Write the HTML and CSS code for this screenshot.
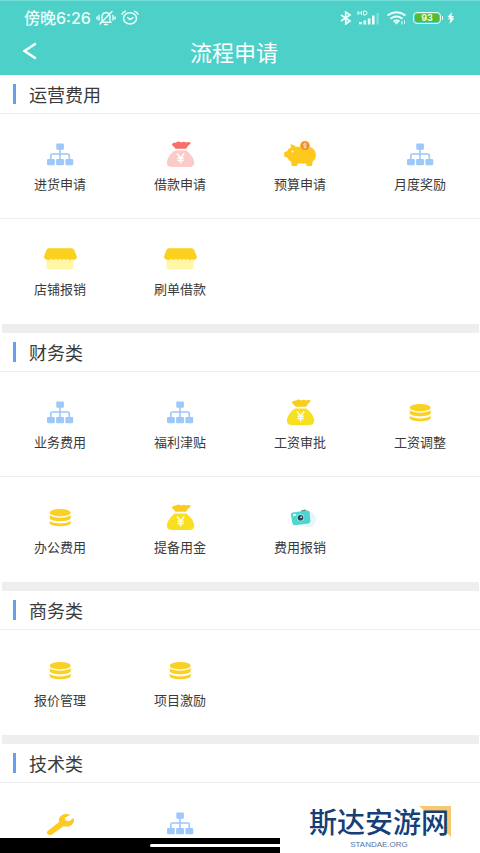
FILE: index.html
```html
<!DOCTYPE html>
<html lang="zh-CN">
<head>
<meta charset="utf-8">
<meta name="viewport" content="width=device-width, initial-scale=1">
<title>流程申请</title>
<link rel="stylesheet" href="styles.css">
</head>
<body>
<svg class="sprite" aria-hidden="true">
  <symbol id="org" viewBox="0 0 36 30">
    <g fill="#9cc8fa"><rect x="14.3" y="3.5" width="7.6" height="6.2" rx="1"/><rect x="5" y="19" width="7.8" height="6.2" rx="1.2"/><rect x="14.1" y="19" width="8" height="6.2" rx="1.2"/><rect x="23.4" y="19" width="7.8" height="6.2" rx="1.2"/></g>
    <path d="M18 9v11M8.800 20v-4.500q0-1.500 1.500-1.500h15.500q1.500 0 1.500 1.500V20" fill="none" stroke="#9cc8fa" stroke-width="1.600"/>
  </symbol>
  <symbol id="bag" viewBox="0 0 36 30">
    <path class="bag-top" d="M13.500 8.800q-1-2.300-3.200-3.400c-.8-1.200.6-3 2.500-2.600 1.700.2 2-1.500 3.800-1.200 1.500.1 2 1 3.200.7 1.500-.9 3-.9 4 .2 1.400-.6 4.400-.8 4.700.7.100 1-1.500 1.500-2.200 2.400-.8 1-1 2-2.300 3.200z"/>
    <path class="bag-body" d="M13 10.500h11c4 2.500 8 7.500 8.200 12 .1 3-2 4.500-5 4.500H9.800c-3 0-5-1.500-4.900-4.500.2-4.500 4.100-9.500 8.100-12z"/>
    <path d="M15 13.500l3.600 4.500 3.600-4.500M18.600 18v5.500M15.500 18.200h6.200M15.500 20.500h6.200" fill="none" stroke="#fff" stroke-width="1.400"/>
  </symbol>
  <symbol id="pig" viewBox="0 0 36 30">
    <path d="M8.500 4.200q3.300-.1 5.500 2.500h13c4.300 1 6.800 4 6.900 8 .1 3-1.200 5.200-3.200 6.800L30 26h-5.300l-.7-2.500h-8.200L15 26H9.800l-.7-4.300c-1.800-1-2.800-2.500-3.600-4L2.200 16.500v-4.300l3-1q.7-2.500 3.800-3.700z" fill="#fcc91c"/>
    <circle cx="10.500" cy="11.500" r="1" fill="#fff"/>
    <circle cx="23" cy="5.700" r="5" fill="#fcc91c"/><circle cx="23" cy="5.700" r="4.200" fill="#ee8b35"/>
    <path d="M24.600 4.300q-1.600-1.100-2.900-.2c-.9 1.100.1 1.500 1.300 1.700 1.400.3 1.900 1 .9 1.700q-1.200.6-2.600-.3M23 2.800v5.800" fill="none" stroke="#ffe6b3" stroke-width=".9"/>
  </symbol>
  <symbol id="shop" viewBox="0 0 36 30">
    <path d="M4.500 12h27v10.500q0 2-2 2h-23q-2 0-2-2z" fill="#fff6a8"/>
    <path d="M7 3.200h22.500q2 0 2.700 1.700l2.500 6.300c.7 3.500-2.700 4.600-4.700 2.700-1.300 1.600-3.300 1.600-4.200-.3-1.300 1.600-3 1.600-4 0-1.200 1.600-2.800 1.600-4 0-1.200 1.600-2.800 1.600-4 0-1.200 1.700-2.900 1.700-4.200.2C7 15.900 1.400 15 2.100 11.200L4.400 4.900Q5 3.200 7 3.200z" fill="#fbd01f"/>
  </symbol>
  <symbol id="coins" viewBox="0 0 36 30">
    <g fill="#fad023"><ellipse cx="18.200" cy="9.700" rx="10.500" ry="3.700"/>
    <path d="M7.700 12.200c4 3.300 17 3.300 21 0v3c-1 4-20 4-21 0z"/>
    <path d="M7.700 17.900c4 3.300 17 3.300 21 0v2.400c-1 4-20 4-21 0z"/></g>
  </symbol>
  <symbol id="camera" viewBox="0 0 36 30">
    <circle cx="26" cy="16.500" r="8" fill="#e6f7f8"/>
    <path d="M19 7.500l4.500-1 1 2-5 1z" fill="#488f91"/>
    <path d="M10.500 9.500l15-2q2-.1 2.200 1.800l.7 9q0 2-2 2.300l-13.500 1.600q-2 .1-2.400-1.900l-1.700-8.500q-.1-2 1.700-2.300z" fill="#4ed5d0"/>
    <path d="M10.700 11.200l3.300-.5.300 2-3.200.5z" fill="#d9ffff"/>
    <circle cx="18.500" cy="14.800" r="3.700" fill="#9ce9e8"/><circle cx="18.500" cy="14.800" r="2.800" fill="#24474f"/><circle cx="19.200" cy="14.200" r=".9" fill="#b9e7e9"/>
  </symbol>
  <symbol id="wrench" viewBox="0 0 36 30">
    <path d="M28.300 5.700c-4.300-1.800-9.400-.3-11 3.300-.6 1.500-.5 2.800-.1 4L5.900 21.700c-1.300 1.200-1.100 2.600-.1 3.600 1.200 1 2.900 1 4.200.1l11.300-8.200c4.300 1.200 9.200-.4 10.500-4.300.4-1.500.3-2.700-.3-3.900l-4.300 3.200-3.800-.8-.6-2.700z" fill="#fcca20"/>
  </symbol>
</svg>

<header class="header">
  <div class="status">
    <div class="status-side">
      <span class="time">傍晚6:26</span>
      <svg width="20" height="16" viewBox="0 0 20 16" fill="none" stroke="#e9fffc" stroke-width="1.400" stroke-linecap="round"><path d="M4.800 12.200h10.400M6 11.500V7q0-4 4-4.500 4 .5 4 4.500v4.500M8.500 14.500h3M4 14L16 1.500M3 5.500v4.500M1 7v2M17 5.500v4.500M19 7v2"/></svg>
      <svg width="18" height="16" viewBox="0 0 18 16" fill="none" stroke="#e9fffc" stroke-width="1.500" stroke-linecap="round"><ellipse cx="9" cy="8.400" rx="6.500" ry="5.600"/><path d="M1 4.200Q2 2 4.500 1.300M17 4.200Q16 2 13.500 1.300M6.500 7.500L9 9.500l3-1.800"/></svg>
    </div>
    <div class="status-side">
      <svg width="12" height="14" viewBox="0 0 12 14" fill="none" stroke="#e9fffc" stroke-width="1.700"><path d="M1 4l9 6-4.300 3V1L10 4l-9 6"/></svg>
      <svg width="24" height="16" viewBox="0 0 24 16"><g fill="#e9fffc"><rect x="2" y="12" width="3" height="2.300"/><rect x="6.500" y="10.500" width="2.600" height="4"/><rect x="10.800" y="8.500" width="2.600" height="6"/><rect x="15" y="5.500" width="2.600" height="9"/><rect x="19.500" y="3" width="2.200" height="11.500" opacity=".35"/></g><path d="M1 1v4M4.500 1v4M1 3h3.500M6.500 1v4H8q2-.2 2-2T8 1z" fill="none" stroke="#e9fffc"/></svg>
      <svg width="22" height="14" viewBox="0 0 22 14" fill="none" stroke="#e9fffc" stroke-width="2"><path d="M1.500 4.500Q10.500-2 19.500 4.500M4.500 7.700q6-4.200 12 0M7.500 10.500q3-2 6 0"/><path d="M9 11.500h3l-1.500 1.700zM16 10v3.500M18.500 9.500V13" stroke-width="1"/></svg>
      <span class="battery">93</span>
      <svg width="8" height="12" viewBox="0 0 8 12"><path d="M5 0L.5 5h2.300L.7 7.200h2.600L2.500 12l5-5.800H5L7.300 4H4.500z" fill="#e9fffc"/></svg>
    </div>
  </div>
  <div class="titlebar">
    <button class="back" type="button" aria-label="返回"><svg width="14" height="18" viewBox="0 0 14 18"><path d="M12.800 1.500L1.500 9l11.300 7.500" fill="none" stroke="#fff" stroke-width="2.500"/></svg></button>
    <h1>流程申请</h1>
  </div>
</header>

<main class="content">
  <section>
    <h2>运营费用</h2>
    <div class="grid">
      <a href="#"><svg><use href="#org"/></svg>进货申请</a>
      <a href="#"><svg class="pink"><use href="#bag"/></svg>借款申请</a>
      <a href="#"><svg><use href="#pig"/></svg>预算申请</a>
      <a href="#"><svg><use href="#org"/></svg>月度奖励</a>
    </div>
    <div class="grid">
      <a href="#"><svg><use href="#shop"/></svg>店铺报销</a>
      <a href="#"><svg><use href="#shop"/></svg>刷单借款</a>
    </div>
  </section>
  <section>
    <h2>财务类</h2>
    <div class="grid">
      <a href="#"><svg><use href="#org"/></svg>业务费用</a>
      <a href="#"><svg><use href="#org"/></svg>福利津贴</a>
      <a href="#"><svg class="gold"><use href="#bag"/></svg>工资审批</a>
      <a href="#"><svg><use href="#coins"/></svg>工资调整</a>
    </div>
    <div class="grid">
      <a href="#"><svg><use href="#coins"/></svg>办公费用</a>
      <a href="#"><svg class="gold"><use href="#bag"/></svg>提备用金</a>
      <a href="#"><svg><use href="#camera"/></svg>费用报销</a>
    </div>
  </section>
  <section>
    <h2>商务类</h2>
    <div class="grid">
      <a href="#"><svg><use href="#coins"/></svg>报价管理</a>
      <a href="#"><svg><use href="#coins"/></svg>项目激励</a>
    </div>
  </section>
  <section>
    <h2>技术类</h2>
    <div class="grid">
      <a href="#" aria-label="维修"><svg><use href="#wrench"/></svg></a>
      <a href="#" aria-label="流程"><svg><use href="#org"/></svg></a>
    </div>
  </section>
</main>

<div class="navbar"><span class="handle"></span></div>

<aside class="watermark">
  <strong>斯达安游网</strong>
  <small>STANDAE.ORG</small>
</aside>
</body>
</html>
```
FILE: styles.css
```css
* {
  box-sizing: border-box;
}

body {
  margin: 0;
  height: 100vh;
  display: flex;
  flex-direction: column;
  overflow: hidden;
  position: relative;
  background: #fff;
  color: #3a3a3a;
  font-family: "Noto Sans CJK SC", sans-serif;
}

.sprite {
  position: absolute;
  width: 0;
  height: 0;
}

.header {
  flex: none;
  height: 75px;
  padding-top: 6px;
  border-top: 1px solid #72e0d9;
  background: #4dd0c8;
  color: #fff;
}

.status {
  display: flex;
  justify-content: space-between;
  height: 22px;
  padding: 0 25px 0 24px;
  color: #e9fffc;
}

.status-side {
  display: flex;
  align-items: center;
  gap: 5px;
}

.time {
  font: 500 16px/22px Inter, "Noto Sans CJK SC", sans-serif;
}

.battery {
  position: relative;
  width: 28px;
  height: 12px;
  margin-right: 1px;
  border: 1px solid #e9fffc;
  border-radius: 4px;
  background: #55bb35;
  box-shadow: inset 0 0 0 1px #4dd0c8;
  color: #f4ffd8;
  font: 700 9px/10px Inter, sans-serif;
  text-align: center;
}

.battery::after {
  content: "";
  position: absolute;
  top: 3px;
  right: -3px;
  width: 1px;
  height: 4px;
  background: #e9fffc;
}

.titlebar {
  display: grid;
  grid-template-columns: 60px 1fr 72px;
  align-items: center;
  height: 44px;
}

.back {
  display: flex;
  justify-content: center;
  padding: 0;
  border: 0;
  background: none;
}

h1 {
  margin: 0;
  font-size: 22px;
  line-height: 30px;
  font-weight: 400;
  text-align: center;
}

.content {
  flex: 1;
  min-height: 0;
  overflow: hidden;
}

section + section::before {
  content: "";
  display: block;
  height: 9px;
  margin: 0 1px 0 2px;
  background: #eee;
}

h2 {
  display: flex;
  align-items: center;
  gap: 13px;
  height: 39px;
  margin: 0;
  padding-left: 13px;
  border-bottom: 1px solid #eee;
  font-size: 18px;
  line-height: 24px;
  font-weight: 400;
}

h2::before {
  content: "";
  width: 3px;
  height: 20px;
  background: #66a0e8;
}

.grid {
  display: grid;
  grid-template-columns: repeat(4, 1fr);
  height: 105px;
  border-bottom: 1px solid #eee;
}

.grid:last-child {
  border-bottom: 0;
}

.grid a {
  display: flex;
  flex-direction: column;
  align-items: center;
  gap: 4px;
  padding-top: 26px;
  color: #3a3a3a;
  font-size: 13px;
  line-height: 20px;
  text-decoration: none;
}

.grid svg {
  width: 36px;
  height: 30px;
}

.pink {
  --bag-top: #f87169;
  --bag-body: #fccbc8;
}

.gold {
  --bag-top: #f8cd1f;
  --bag-body: #f8df20;
}

.bag-top {
  fill: var(--bag-top);
}

.bag-body {
  fill: var(--bag-body);
}

.navbar {
  flex: none;
  display: flex;
  justify-content: center;
  align-items: center;
  height: 15px;
  background: #000;
}

.handle {
  width: 180px;
  height: 3px;
  border-radius: 2px;
  background: #fff;
}

.watermark {
  position: absolute;
  right: 0;
  bottom: 0;
  display: flex;
  flex-direction: column;
  align-items: center;
  gap: 2px;
  width: 200px;
  height: 48px;
  padding-right: 2px;
  background: #fff;
  color: #153f77;
}

.watermark strong {
  position: relative;
  padding: 0 2px;
  font-size: 28px;
  line-height: 32px;
  font-weight: 500;
}

.watermark strong::before {
  content: "";
  position: absolute;
  z-index: -1;
  top: 1px;
  right: 0;
  width: 32px;
  height: 31px;
  background: #f7c870;
  clip-path: polygon(0 0, 100% 0, 100% 100%, 82% 82%, 82% 16%, 18% 16%);
}

.watermark {
  z-index: 1;
}

.watermark small {
  font: 8px/12px "Liberation Sans", sans-serif;
  color: #5674a0;
}
```
